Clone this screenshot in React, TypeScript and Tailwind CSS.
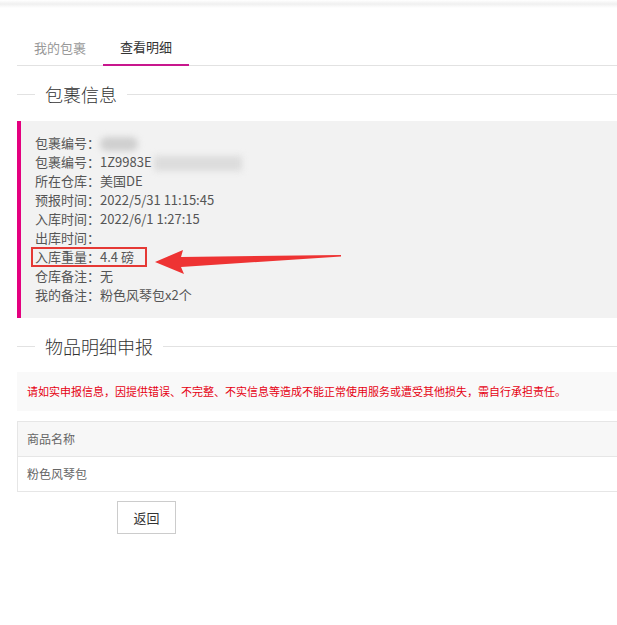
import React from 'react';

const INFO_ROWS: { label: string; value: React.ReactNode }[] = [
  {
    label: '包裹编号',
    value: <span className="inline-block w-[38px] h-[14px] align-middle bg-[#cfcfcf] rounded-full blur-[3px]" />,
  },
  {
    label: '包裹编号',
    value: (
      <>
        1Z9983E
        <span className="inline-block w-[88px] h-[15px] align-middle bg-[#dcdcdc] blur-[3px] ml-[2px]" />
      </>
    ),
  },
  { label: '所在仓库', value: '美国DE' },
  { label: '预报时间', value: '2022/5/31 11:15:45' },
  { label: '入库时间', value: '2022/6/1 1:27:15' },
  { label: '出库时间', value: '' },
  { label: '入库重量', value: '4.4 磅' },
  { label: '仓库备注', value: '无' },
  { label: '我的备注', value: '粉色风琴包x2个' },
];

function SectionTitle({ title }: { title: string }) {
  return (
    <div className="flex items-center h-[28px]">
      <div className="w-[18px] h-px bg-[#e2e2e2]" />
      <div className="px-[10px] text-[18px] leading-[28px] font-light text-[#333]">{title}</div>
      <div className="flex-1 h-px bg-[#e2e2e2]" />
    </div>
  );
}

export default function App() {
  return (
    <div
      className="w-[617px] h-[625px] bg-white overflow-hidden"
      style={{ fontFamily: '"Noto Sans CJK SC", "Microsoft YaHei", sans-serif' }}
    >
      {/* top shadow strip */}
      <div className="h-[8px] bg-gradient-to-b from-white via-[#f0f0f0] to-white" />

      <div className="pl-[17px] pt-[22px]">
        {/* tabs */}
        <div className="flex h-[36px] border-b border-[#e2e2e2] text-[13px]">
          <div className="w-[86px] flex items-center justify-center text-[#999]">我的包裹</div>
          <div className="w-[86px] flex items-center justify-center text-[#333] border-b-2 border-[#c8168d] -mb-px">
            查看明细
          </div>
        </div>

        <div className="mt-[14px]">
          <SectionTitle title="包裹信息" />
        </div>

        {/* info box */}
        <div className="relative mt-[13px] bg-[#f2f2f2] border-l-4 border-[#e4007f] pl-[14px] pt-[12px] pb-[14px] h-[197px]">
          {INFO_ROWS.map((row, i) => (
            <div key={i} className="text-[13px] leading-[19px] text-[#555] whitespace-nowrap">
              {row.label}：{row.value}
            </div>
          ))}

          {/* annotation box */}
          <div className="absolute left-[10px] top-[126px] w-[116px] h-[20px] border-2 border-[#e53935]" />
          {/* annotation arrow */}
          <svg
            className="absolute left-[134px] top-[128px]"
            width="190"
            height="28"
            viewBox="0 0 190 28"
          >
            <polygon
              points="0,13 28,1 26,8 186,6 186,7.5 26,18 29,25"
              fill="#ee3333"
            />
          </svg>
        </div>

        <div className="mt-[14px]">
          <SectionTitle title="物品明细申报" />
        </div>

        {/* notice */}
        <div className="mt-[12px] h-[39px] bg-[#f9f9f9] flex items-center pl-[10px] text-[11px] text-[#e60012] whitespace-nowrap">
          请如实申报信息，因提供错误、不完整、不实信息等造成不能正常使用服务或遭受其他损失，需自行承担责任。
        </div>

        {/* table */}
        <div className="mt-[10px] border border-[#e6e6e6] border-r-0 text-[12px] text-[#666]">
          <div className="h-[35px] bg-[#f7f7f7] flex items-center pl-[9px] border-b border-[#e6e6e6]">商品名称</div>
          <div className="h-[34px] bg-white flex items-center pl-[9px]">粉色风琴包</div>
        </div>

        <div className="mt-[9px] pl-[100px]">
          <button className="w-[59px] h-[33px] border border-[#cccccc] bg-white text-[13px] text-[#333]">
            返回
          </button>
        </div>
      </div>
    </div>
  );
}
